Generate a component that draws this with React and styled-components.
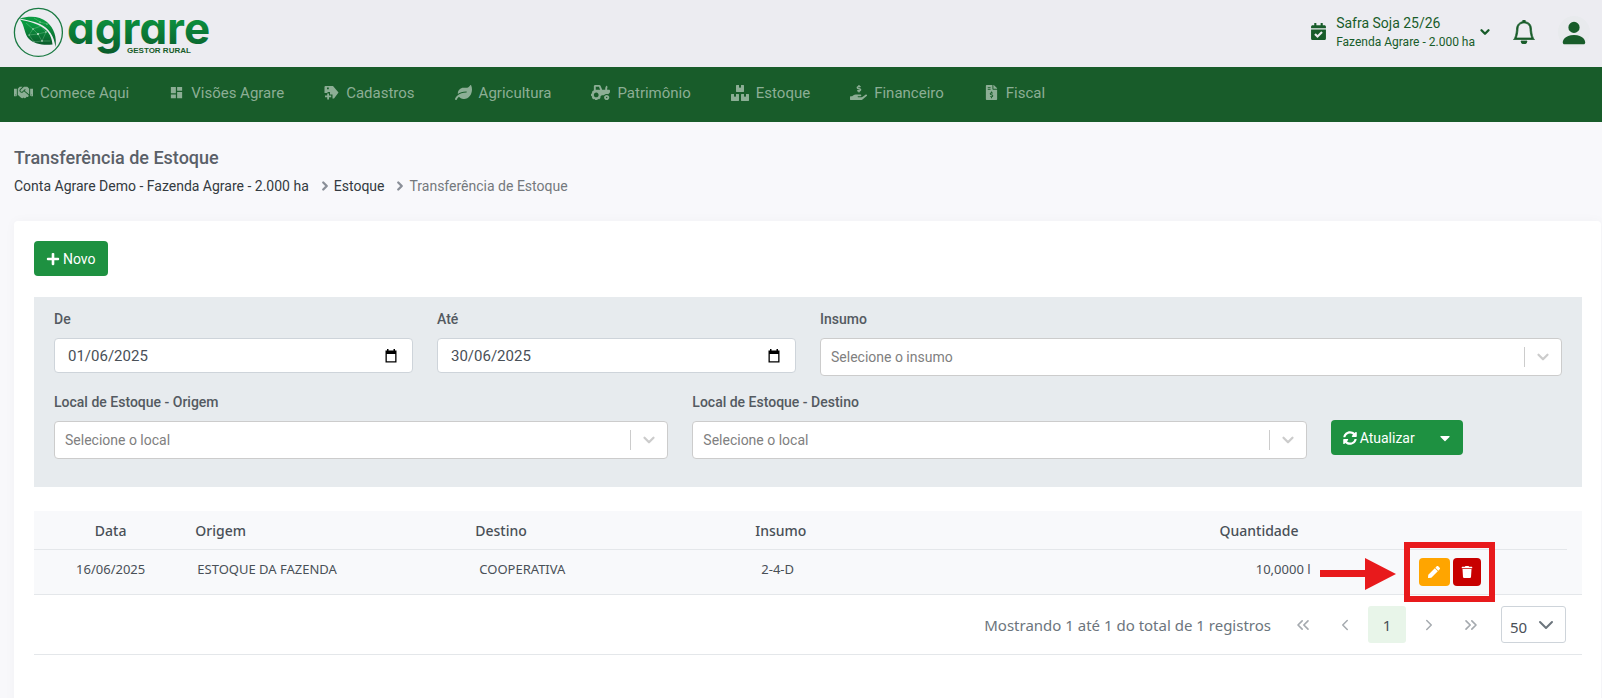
import styled, { createGlobalStyle } from "styled-components";
import {
  FaHandshake,
  FaLeaf,
  FaTractor,
  FaBoxes,
  FaHandHoldingUsd,
  FaFileInvoiceDollar,
  FaCalendarCheck,
  FaPlus,
  FaCaretDown,
  FaTrash,
  FaPen,
  FaSyncAlt,
} from "react-icons/fa";
import { MdDashboard } from "react-icons/md";
import { BsPersonFill, BsBell } from "react-icons/bs";
import {
  ChevronDown,
  ChevronLeft,
  ChevronRight,
  ChevronsLeft,
  ChevronsRight,
} from "lucide-react";

const GlobalStyle = createGlobalStyle`
  * {
    box-sizing: border-box;
  }
  body {
    margin: 0;
    color: #495057;
    background: #f8f8fb;
    font-family: Roboto, "Liberation Sans", sans-serif;
    font-size: 14px;
  }
  button, input, select {
    font: inherit;
  }
`;

const Topbar = styled.header`
  display: flex;
  align-items: center;
  justify-content: space-between;
  height: 67px;
  padding: 0 12px 4px 13px;
  color: #185c2a;
  background: #ececf1;
`;

const LogoLink = styled.a`
  display: block;
  height: 62px;
`;

const TopbarRight = styled.div`
  display: flex;
  align-items: center;
`;

const Safra = styled.button`
  display: flex;
  align-items: center;
  gap: 9px;
  margin-right: 16px;
  padding: 0;
  color: inherit;
  text-align: left;
  border: 0;
  background: none;
  strong {
    display: block;
    font-size: 14px;
    font-weight: 400;
    line-height: 20px;
  }
  small {
    display: block;
    font-size: 12px;
    line-height: 18px;
  }
`;

const SafraText = styled.span`
  margin-right: -6px;
`;

const IconButton = styled.button`
  display: flex;
  align-items: center;
  justify-content: center;
  width: 32px;
  height: 32px;
  padding: 0;
  color: inherit;
  border: 0;
  background: none;
`;

const Avatar = styled(IconButton)`
  align-items: flex-end;
  margin-left: 18px;
  border-radius: 50%;
  background: #e8eaed;
`;

const Nav = styled.nav`
  display: flex;
  gap: 40px;
  height: 55px;
  padding: 0 14px;
  background: #185c2a;
`;

const NavItem = styled.a`
  display: flex;
  align-items: center;
  gap: 7px;
  padding-bottom: 4px;
  color: #8cae95;
  font-size: 15px;
  text-decoration: none;
`;

const PageHeader = styled.div`
  padding: 25px 14px;
`;

const Title = styled.h1`
  margin: 0;
  color: #5a6068;
  font-size: 18px;
  font-weight: 500;
  line-height: 22px;
`;

const Breadcrumb = styled.ol`
  display: flex;
  margin: 7px 0 0;
  padding: 0;
  font-size: 14px;
  line-height: 20px;
  list-style: none;
  a {
    color: #343a40;
    text-decoration: none;
  }
`;

const Crumb = styled.li`
  display: flex;
  align-items: center;
  color: #74787d;
  svg {
    margin: 0 2px 0 9px;
    color: #8a8f98;
  }
`;

const Card = styled.main`
  min-height: 500px;
  margin: 0 1px 0 14px;
  padding: 20px 19px 20px 20px;
  background: #fff;
  border-radius: 4px;
  box-shadow: 0 0 12px rgba(18, 38, 63, 0.03);
`;

const Button = styled.button`
  display: flex;
  align-items: center;
  gap: 3px;
  height: 35px;
  padding: 0 12px;
  color: #fff;
  font-size: 14px;
  border: 0;
  border-radius: 4px;
  background: #1e9141;
`;

const Filters = styled.form`
  display: grid;
  grid-template-columns: repeat(12, 1fr);
  column-gap: 24px;
  row-gap: 16px;
  margin: 21px 0 24px;
  padding: 12px 20px 28px;
  background: #e7ebee;
`;

const Field = styled.div`
  grid-column: span ${({ $span }) => $span};
  display: flex;
  flex-direction: column;
  align-items: flex-start;
`;

const Label = styled.label`
  margin-bottom: 9px;
  color: #545a61;
  font-weight: 500;
  line-height: 20px;
`;

const Control = styled.div`
  display: flex;
  align-items: center;
  width: 100%;
  height: ${({ $tall }) => ($tall ? "38px" : "35px")};
  padding-right: ${({ $tall }) => ($tall ? "9px" : "14px")};
  border: 1px solid ${({ $tall }) => ($tall ? "#ccc" : "#ced4da")};
  border-radius: 4px;
  background: #fff;
`;

const DateInput = styled.input`
  flex: 1;
  min-width: 0;
  padding: 0 13px;
  color: #495057;
  font-size: 15px;
  border: 0;
  outline: 0;
  background: none;
`;

const Select = styled.select`
  flex: 1;
  align-self: stretch;
  min-width: 0;
  padding: 0 10px;
  color: #808080;
  border: 0;
  outline: 0;
  background: none;
  appearance: none;
`;

const Indicator = styled.span`
  display: flex;
  align-items: center;
  height: 20px;
  padding-left: 9px;
  color: #ccc;
  border-left: 1px solid #ccc;
`;

const SplitButton = styled.div`
  grid-column: span 2;
  align-self: end;
  display: flex;
  margin-bottom: 4px;
  ${Button}:first-child {
    border-radius: 4px 0 0 4px;
  }
  ${Button}:last-child {
    padding: 0 10px;
    border-radius: 0 4px 4px 0;
  }
`;

const TableWrap = styled.section`
  border-bottom: 1px solid #e4e7ea;
  font-family: "Noto Sans", sans-serif;
`;

const TableBox = styled.div`
  padding-right: 15px;
  background: #f8f9fb;
  border-bottom: 1px solid #e4e7ea;
`;

const Table = styled.table`
  width: 100%;
  table-layout: fixed;
  border-collapse: collapse;
  thead tr {
    border-bottom: 1px solid #e4e7ea;
  }
`;

const Th = styled.th`
  width: ${({ $width }) => $width};
  height: 38px;
  padding: ${({ $pad }) => $pad || "1px 8px 0"};
  font-size: 14px;
  font-weight: 500;
  text-align: ${({ $align }) => $align || "left"};
`;

const Td = styled.td`
  height: 45px;
  padding: ${({ $pad }) => $pad || "0 8px 6px"};
  font-size: 13px;
  text-align: ${({ $align }) => $align || "left"};
`;

const Actions = styled.div`
  position: relative;
  display: flex;
  gap: 3px;
  width: max-content;
`;

const ActionButton = styled.button`
  display: flex;
  align-items: center;
  justify-content: center;
  width: ${({ $danger }) => ($danger ? "28px" : "31px")};
  height: 28px;
  padding: 0;
  color: #fff;
  border: 0;
  border-radius: 4px;
  background: ${({ $danger }) => ($danger ? "#c80000" : "#ffa500")};
`;

const Highlight = styled.span`
  position: absolute;
  top: -16px;
  left: -15px;
  width: 91px;
  height: 60px;
  border: 6px solid #e81a1c;
`;

const Arrow = styled.svg`
  position: absolute;
  top: 0;
  left: -99px;
`;

const Pager = styled.div`
  display: flex;
  align-items: center;
  justify-content: flex-end;
  height: 59px;
  padding-right: 16px;
  color: #6c757d;
`;

const PagerText = styled.span`
  margin-right: 11px;
  font-size: 15px;
`;

const PageButton = styled.button`
  display: flex;
  align-items: center;
  justify-content: center;
  width: 38px;
  height: 37px;
  margin: 0 2px;
  padding: 0;
  color: ${({ $active }) => ($active ? "#495057" : "#a5aaaf")};
  font-size: 15px;
  border: 0;
  border-radius: 3px;
  background: ${({ $active }) => ($active ? "#e8f5e9" : "none")};
`;

const PageSize = styled.div`
  display: flex;
  align-items: center;
  width: 65px;
  height: 37px;
  margin-left: 9px;
  padding-right: 7px;
  border: 1px solid #ced4da;
  border-radius: 3px;
  select {
    flex: 1;
    align-self: stretch;
    min-width: 0;
    padding: 4px 0 0 8px;
    color: #495057;
    font-size: 15px;
    border: 0;
    outline: 0;
    background: none;
    appearance: none;
  }
`;

const Logo = () => (
  <svg width="210" height="62" viewBox="13 0 210 62" role="img" aria-label="agrare gestor rural">
    <defs>
      <linearGradient id="brand" x1="0" y1="0" x2="0" y2="1">
        <stop offset="0.2" stopColor="#0b9a41" />
        <stop offset="1" stopColor="#0a5a2b" />
      </linearGradient>
    </defs>
    <circle cx="38.4" cy="31.4" r="24" fill="none" stroke="#1a7a43" strokeWidth="1.3" />
    <path
      fill="url(#brand)"
      d="M19.500 17.500C30 14.500 40 15 47 21C54 27 57 36 55.500 46C54 35 49 27 40 23C33 20 26 19 19.500 17.500Z"
    />
    <path
      fill="url(#brand)"
      d="M20 18.500C30 21 40 23 46 29C51 34 52 39 52.500 43.500C44 44 35 44 29 38C24 33 25 25 20 18.500Z"
    />
    <path
      fill="none"
      stroke="#a9d8b5"
      strokeWidth="0.3"
      d="M26 22L33 28L41 25L46 31L38 33L33 28L29 34L38 33L42 40L34 41L29 34M46 31L42 40L50 40M34 17L40 21L47 23"
    />
    <g fill="#d8f0dd">
      <circle cx="33" cy="28" r="0.7" />
      <circle cx="38" cy="33" r="0.9" />
      <circle cx="46" cy="31" r="0.7" />
      <circle cx="42" cy="40" r="0.8" />
      <circle cx="29" cy="34" r="0.6" />
      <circle cx="34" cy="41" r="0.6" />
      <circle cx="40" cy="21" r="0.6" />
      <circle cx="47" cy="23" r="0.6" />
    </g>
    <text
      x="67"
      y="43"
      fill="url(#brand)"
      fontFamily="Inter, sans-serif"
      fontSize="44"
      fontWeight="700"
      style={{ fontFeatureSettings: '"cv11"' }}
    >
      agrare
    </text>
    <text
      x="127"
      y="52"
      fill="#185c2a"
      fontFamily="Liberation Sans, sans-serif"
      fontSize="8"
      fontWeight="700"
    >
      GESTOR RURAL
    </text>
  </svg>
);

const TagPlus = ({ size }) => (
  <svg width={size} height={size} viewBox="0 0 15 15" fill="currentColor" aria-hidden="true">
    <path
      fillRule="evenodd"
      d="M1.500 1H9l5.500 6.500L10 13.500H8.500V9.500H6V7H3.500v1H.5V2a1 1 0 0 1 1-1zM3 2.500v1.800h1.800V2.500z"
    />
    <path d="M3.200 8.500h1.800v2h2.200v1.800H5v2.200H3.200v-2.200H1v-1.800h2.200z" />
  </svg>
);

const menu = [
  { label: "Comece Aqui", icon: FaHandshake, size: 19 },
  { label: "Visões Agrare", icon: MdDashboard, size: 15 },
  { label: "Cadastros", icon: TagPlus, size: 15 },
  { label: "Agricultura", icon: FaLeaf, size: 17 },
  { label: "Patrimônio", icon: FaTractor, size: 19 },
  { label: "Estoque", icon: FaBoxes, size: 18 },
  { label: "Financeiro", icon: FaHandHoldingUsd, size: 17 },
  { label: "Fiscal", icon: FaFileInvoiceDollar, size: 15 },
];

const DateField = ({ id, label, value }) => (
  <Field $span={3}>
    <Label htmlFor={id}>{label}</Label>
    <Control>
      <DateInput id={id} type="text" defaultValue={value} />
      <svg width="14" height="14" viewBox="0 0 14 14" fill="#000" aria-hidden="true">
        <path
          fillRule="evenodd"
          d="M3 0h1.500v1.500h5V0H11v1.500h1.500V13.500h-11V1.500H3zM2.800 5v7.200h8.400V5z"
        />
      </svg>
    </Control>
  </Field>
);

const SelectField = ({ id, label, placeholder, span }) => (
  <Field $span={span}>
    <Label htmlFor={id}>{label}</Label>
    <Control $tall>
      <Select id={id}>
        <option>{placeholder}</option>
      </Select>
      <Indicator>
        <ChevronDown size={18} strokeWidth={3} />
      </Indicator>
    </Control>
  </Field>
);

const App = () => {
  return (
    <>
      <GlobalStyle />
      <Topbar>
        <LogoLink href="#">
          <Logo />
        </LogoLink>
        <TopbarRight>
          <Safra>
            <FaCalendarCheck size={17} />
            <SafraText>
              <strong>Safra Soja 25/26</strong>
              <small>Fazenda Agrare - 2.000 ha</small>
            </SafraText>
            <ChevronDown size={14} strokeWidth={4} />
          </Safra>
          <IconButton aria-label="Notificações">
            <BsBell size={24} stroke="currentColor" strokeWidth={0.5} />
          </IconButton>
          <Avatar aria-label="Perfil">
            <BsPersonFill size={30} />
          </Avatar>
        </TopbarRight>
      </Topbar>
      <Nav>
        {menu.map(({ label, icon: Icon, size }) => (
          <NavItem href="#" key={label}>
            <Icon size={size} />
            {label}
          </NavItem>
        ))}
      </Nav>
      <PageHeader>
        <Title>Transferência de Estoque</Title>
        <Breadcrumb>
          <Crumb>
            <a href="#">Conta Agrare Demo - Fazenda Agrare - 2.000 ha</a>
          </Crumb>
          <Crumb>
            <ChevronRight size={14} strokeWidth={4} />
            <a href="#">Estoque</a>
          </Crumb>
          <Crumb>
            <ChevronRight size={14} strokeWidth={4} />
            Transferência de Estoque
          </Crumb>
        </Breadcrumb>
      </PageHeader>
      <Card>
        <Button>
          <FaPlus size={14} />
          Novo
        </Button>
        <Filters>
          <DateField id="de" label="De" value="01/06/2025" />
          <DateField id="ate" label="Até" value="30/06/2025" />
          <SelectField id="insumo" label="Insumo" placeholder="Selecione o insumo" span={6} />
          <SelectField
            id="origem"
            label="Local de Estoque - Origem"
            placeholder="Selecione o local"
            span={5}
          />
          <SelectField
            id="destino"
            label="Local de Estoque - Destino"
            placeholder="Selecione o local"
            span={5}
          />
          <SplitButton>
            <Button type="button">
              <FaSyncAlt size={14} />
              Atualizar
            </Button>
            <Button type="button" aria-label="Mais opções">
              <FaCaretDown size={16} />
            </Button>
          </SplitButton>
        </Filters>
        <TableWrap>
          <TableBox>
            <Table>
              <thead>
                <tr>
                  <Th $width="10%" $align="center">Data</Th>
                  <Th $width="280px">Origem</Th>
                  <Th $width="280px">Destino</Th>
                  <Th $width="372px">Insumo</Th>
                  <Th $width="13%" $align="right" $pad="1px 20px 0 8px">Quantidade</Th>
                  <Th aria-label="Ações" />
                </tr>
              </thead>
              <tbody>
                <tr>
                  <Td $align="center">16/06/2025</Td>
                  <Td $pad="0 10px 6px">ESTOQUE DA FAZENDA</Td>
                  <Td $pad="0 12px 6px">COOPERATIVA</Td>
                  <Td $pad="0 14px 6px">2-4-D</Td>
                  <Td $align="right">10,0000 l</Td>
                  <Td $pad="0 0 0 100px">
                    <Actions>
                      <ActionButton aria-label="Editar">
                        <FaPen size={12} />
                      </ActionButton>
                      <ActionButton $danger aria-label="Excluir">
                        <FaTrash size={12} />
                      </ActionButton>
                      <Highlight />
                      <Arrow width="76" height="32" viewBox="0 0 76 32">
                        <path fill="#e81a1c" d="M0 12h45V0l31 16-31 16V19H0z" />
                      </Arrow>
                    </Actions>
                  </Td>
                </tr>
              </tbody>
            </Table>
          </TableBox>
          <Pager>
            <PagerText>Mostrando 1 até 1 do total de 1 registros</PagerText>
            <PageButton aria-label="Primeira página">
              <ChevronsLeft size={20} />
            </PageButton>
            <PageButton aria-label="Página anterior">
              <ChevronLeft size={18} />
            </PageButton>
            <PageButton $active>1</PageButton>
            <PageButton aria-label="Próxima página">
              <ChevronRight size={18} />
            </PageButton>
            <PageButton aria-label="Última página">
              <ChevronsRight size={20} />
            </PageButton>
            <PageSize>
              <select aria-label="Registros por página" defaultValue="50">
                <option>50</option>
              </select>
              <ChevronDown size={24} />
            </PageSize>
          </Pager>
        </TableWrap>
      </Card>
    </>
  );
};

export default App;
